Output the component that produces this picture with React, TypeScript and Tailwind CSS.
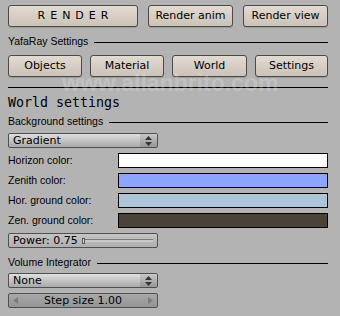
import { ReactNode } from "react";

// Blender 2.4x style panel: YafaRay world settings

const ui = { fontFamily: '"DejaVu Sans", sans-serif' };
const lbl = { fontFamily: '"Liberation Sans", Arial, sans-serif' };

const Btn = ({ children, className = "" }: { children: ReactNode; className?: string }) => (
    <div
        className={`h-[22px] flex items-center justify-center rounded-[3px] border border-[#4a4a4a] bg-gradient-to-b from-[#e2dbd2] to-[#cbc2b8] shadow-[0_1px_0_#9a9a9a] text-[11px] text-black ${className}`}
        style={ui}
    >
        {children}
    </div>
);

const SectionLabel = ({ text }: { text: string }) => (
    <div className="flex items-center gap-[6px] h-[14px]">
        <span className="text-[10.5px] text-black whitespace-nowrap" style={lbl}>
            {text}
        </span>
        <div className="flex-1 h-px bg-black" />
    </div>
);

const Select = ({ value }: { value: string }) => (
    <div
        className="w-[150px] h-[15px] flex rounded-[2px] border border-[#505050] bg-gradient-to-b from-[#e0e0e0] to-[#a9a9a9] overflow-hidden"
        style={ui}
    >
        <div className="flex-1 pl-1 text-[11px] leading-[13px] text-black">{value}</div>
        <div className="w-[17px] flex flex-col items-center justify-center gap-[2px] bg-gradient-to-b from-[#c8c8c8] to-[#969696]">
            <svg width="7" height="4" viewBox="0 0 7 4"><path d="M0 4 L3.5 0 L7 4 Z" fill="#333" /></svg>
            <svg width="7" height="4" viewBox="0 0 7 4"><path d="M0 0 L3.5 4 L7 0 Z" fill="#333" /></svg>
        </div>
    </div>
);

const ColorRow = ({ label, color }: { label: string; color: string }) => (
    <div className="flex items-center h-[15px]">
        <span className="w-[110px] text-[10.5px] text-black" style={lbl}>
            {label}
        </span>
        <div className="flex-1 h-[15px] border border-black" style={{ background: color }} />
    </div>
);

export default function App() {
    return (
        <div className="relative w-[340px] h-[316px] overflow-hidden bg-[#b3b3b3] pl-2 pr-3 pt-[5px] flex flex-col">
            {/* render buttons */}
            <div className="flex gap-[10px]">
                <Btn className="w-[130px] tracking-[5px] pl-[5px]">RENDER</Btn>
                <Btn className="w-[85px]">Render anim</Btn>
                <Btn className="w-[85px]">Render view</Btn>
            </div>

            <div className="mt-[8px]">
                <SectionLabel text="YafaRay Settings" />
            </div>

            <div className="mt-[6px] flex gap-[8px]">
                <Btn className="w-[74px]">Objects</Btn>
                <Btn className="w-[74px]">Material</Btn>
                <Btn className="w-[75px]">World</Btn>
                <Btn className="w-[73px]">Settings</Btn>
            </div>

            <div className="mt-[10px] h-px bg-black" />

            <div
                className="mt-[7px] h-[16px] text-[13.3px] leading-[16px] text-black font-light"
                style={{ fontFamily: '"DejaVu Sans Mono", monospace' }}
            >
                World settings
            </div>

            <div className="mt-[4px]">
                <SectionLabel text="Background settings" />
            </div>

            <div className="mt-[4px]">
                <Select value="Gradient" />
            </div>

            <div className="mt-[5px] flex flex-col gap-[5px]">
                <ColorRow label="Horizon color:" color="#ffffff" />
                <ColorRow label="Zenith color:" color="#8ea6ff" />
                <ColorRow label="Hor. ground color:" color="#adc4d9" />
                <ColorRow label="Zen. ground color:" color="#4a4438" />
            </div>

            {/* power slider */}
            <div
                className="mt-[5px] w-[150px] h-[15px] flex items-center rounded-[2px] border border-[#505050] bg-gradient-to-b from-[#c4c4c4] to-[#b0b0b0] pl-1 pr-[4px]"
                style={ui}
            >
                <span className="text-[11px] leading-[13px] text-black">Power: 0.75</span>
                <div className="relative flex-1 ml-[4px] h-[6px] flex items-center">
                    <div className="w-full h-[3px] border-t border-[#7a7a7a] bg-[#c8c8c8]" />
                    <div className="absolute left-0 top-0 w-[3px] h-[6px] bg-[#d8d8d8] border border-[#555]" />
                </div>
            </div>

            <div className="mt-[8px]">
                <SectionLabel text="Volume Integrator" />
            </div>

            <div className="mt-[3px]">
                <Select value="None" />
            </div>

            {/* step size field */}
            <div
                className="mt-[5px] w-[150px] h-[15px] flex items-center justify-between rounded-[2px] border border-[#505050] bg-gradient-to-b from-[#a8a8a8] to-[#959595] px-[4px]"
                style={ui}
            >
                <svg width="5" height="7" viewBox="0 0 5 7"><path d="M5 0 L0 3.5 L5 7 Z" fill="#7c7c7c" /></svg>
                <span className="text-[11px] leading-[13px] text-black">Step size 1.00</span>
                <svg width="5" height="7" viewBox="0 0 5 7"><path d="M0 0 L5 3.5 L0 7 Z" fill="#7c7c7c" /></svg>
            </div>

            {/* watermark */}
            <div
                className="pointer-events-none absolute left-[62px] top-[74px] text-[23px] leading-[19px] font-bold text-white/20 whitespace-nowrap"
                style={lbl}
            >
                www.allanbrito.com
            </div>
        </div>
    );
}
